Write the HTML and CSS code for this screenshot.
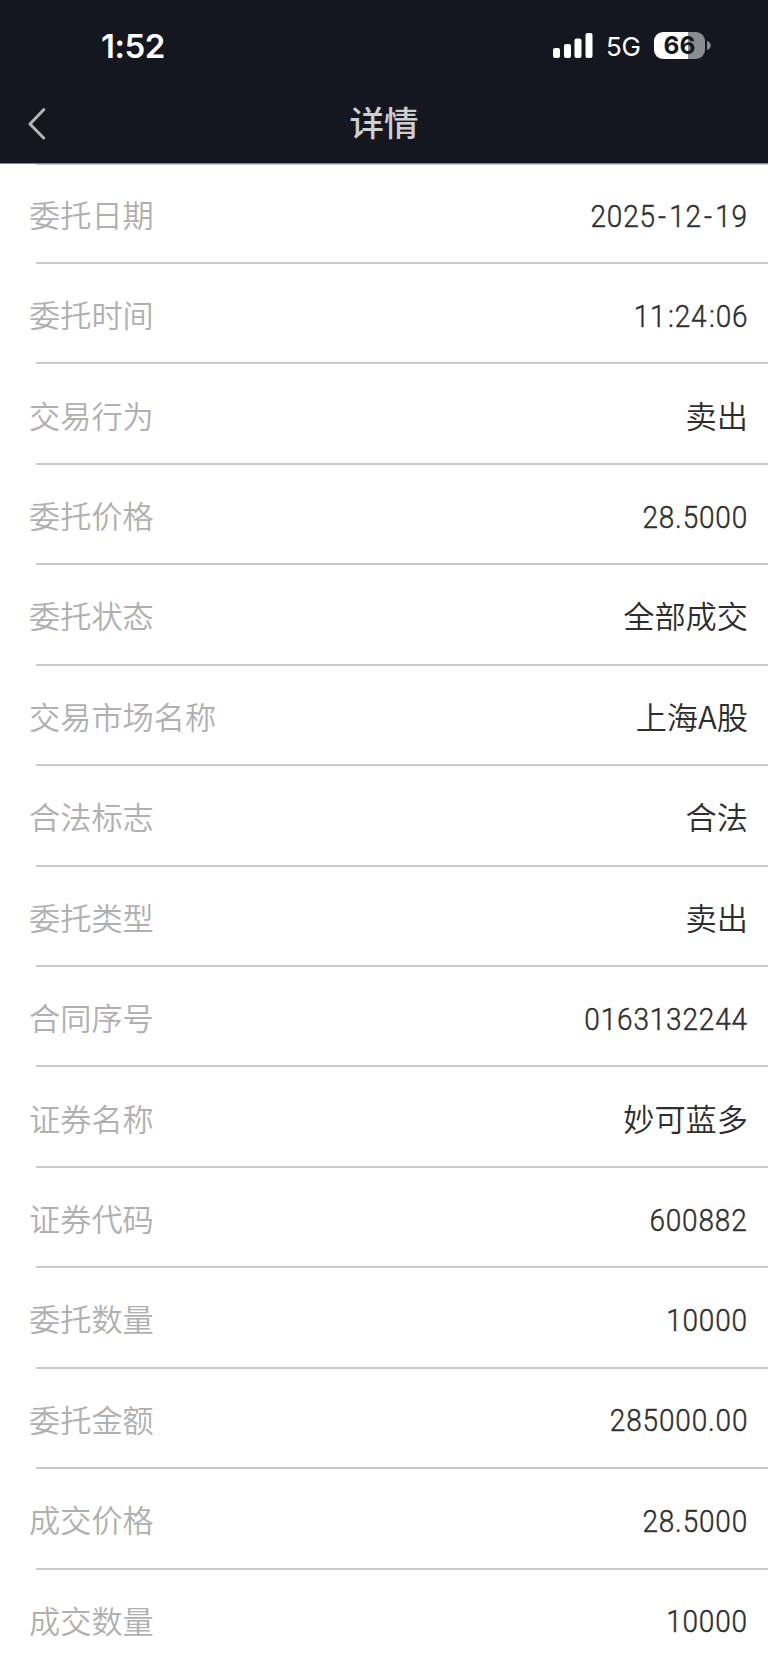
FILE: index.html
```html
<!DOCTYPE html>
<html lang="zh-CN">
<head>
    <meta charset="UTF-8">
    <meta name="viewport" content="width=device-width, initial-scale=1.0">
    <title>详情</title>
    <link rel="stylesheet" href="styles.css">
</head>
<body>

    <header class="header">
        <div class="status-bar">
            <span class="time">1:52</span>
            <div class="status-icons">
                <svg class="signal" width="40" height="25" viewBox="0 0 40 25" fill="#fff">
                    <rect x="0" y="15" width="7" height="10" rx="2"/>
                    <rect x="11" y="11" width="7" height="14" rx="2"/>
                    <rect x="21.5" y="5.5" width="7" height="19.5" rx="2"/>
                    <rect x="32.5" y="0" width="7" height="25" rx="2"/>
                </svg>
                <span class="network">5G</span>
                <div class="battery">66</div>
                <svg class="battery-tip" width="4" height="9" viewBox="0 0 4 9">
                    <path d="M0 0C5 1.5 5 7.5 0 9Z" fill="#8b8c90"/>
                </svg>
            </div>
        </div>
        <div class="nav-bar">
            <svg class="back" width="18" height="34" viewBox="0 0 18 34" fill="none" stroke="#b4b4b4" stroke-width="3" stroke-linecap="round" stroke-linejoin="round">
                <path d="M15.7 2.7L2 17L15.7 31"/>
            </svg>
            <h1>详情</h1>
        </div>
    </header>

    <div class="details">
        <div class="row"><span class="label">委托日期</span><span class="value num">2025<i class="dash">-</i>12<i class="dash">-</i>19</span></div>
        <div class="row"><span class="label">委托时间</span><span class="value num">11<i class="colon">:</i>24<i class="colon">:</i>06</span></div>
        <div class="row"><span class="label">交易行为</span><span class="value">卖出</span></div>
        <div class="row"><span class="label">委托价格</span><span class="value num">28.5000</span></div>
        <div class="row"><span class="label">委托状态</span><span class="value">全部成交</span></div>
        <div class="row"><span class="label">交易市场名称</span><span class="value">上海A股</span></div>
        <div class="row"><span class="label">合法标志</span><span class="value">合法</span></div>
        <div class="row"><span class="label">委托类型</span><span class="value">卖出</span></div>
        <div class="row"><span class="label">合同序号</span><span class="value num">0163132244</span></div>
        <div class="row"><span class="label">证券名称</span><span class="value">妙可蓝多</span></div>
        <div class="row"><span class="label">证券代码</span><span class="value num">600882</span></div>
        <div class="row"><span class="label">委托数量</span><span class="value num">10000</span></div>
        <div class="row"><span class="label">委托金额</span><span class="value num">285000.00</span></div>
        <div class="row"><span class="label">成交价格</span><span class="value num">28.5000</span></div>
        <div class="row"><span class="label">成交数量</span><span class="value num">10000</span></div>
    </div>

</body>
</html>
```
FILE: styles.css
```css
* {
    box-sizing: border-box;
}

body {
    margin: 0;
    height: 1662px;
    overflow: hidden;
    background: #fff;
    font-family: "Noto Sans CJK SC", sans-serif;
}

.header {
    height: 163.6px;
    background: #141720;
    border-bottom: 1px solid #85868b;
}

.status-bar {
    display: flex;
    justify-content: space-between;
    height: 92px;
    padding: 0 57px 0 101px;
    font-family: Inter, sans-serif;
    color: #fff;
}

.time {
    margin-top: 26px;
    font-size: 33px;
    line-height: 40px;
    font-weight: 600;
    letter-spacing: -0.5px;
}

.status-icons {
    display: flex;
    align-items: center;
    height: 90px;
}

.signal {
    margin-top: 1px;
}

.network {
    margin-left: 13px;
    width: 35px;
    font-size: 26px;
    font-weight: 400;
    letter-spacing: -0.3px;
    margin-top: 3px;
}

.battery {
    width: 51px;
    height: 27px;
    margin-left: 13px;
    border-radius: 9px;
    background: linear-gradient(90deg, #fff 66%, #8b8c90 66%);
    color: #141720;
    font-size: 24.5px;
    line-height: 27px;
    font-weight: 650;
    text-align: center;
}

.battery-tip {
    margin-left: 2px;
}

.nav-bar {
    display: grid;
    grid-template-columns: 100px 1fr 100px;
    align-items: center;
    height: 64px;
}

.back {
    margin-left: 28px;
}

h1 {
    margin: -7px 0 0;
    font-size: 34.5px;
    line-height: 60px;
    font-weight: 500;
    color: #cfcfcf;
    text-align: center;
}

.row {
    display: flex;
    justify-content: space-between;
    align-items: center;
    height: 100.43px;
    margin-left: 36px;
    padding: 2px 20px 0 0;
    border-bottom: 2px solid #cacacc;
    font-size: 31.2px;
    line-height: 46px;
}

.row:first-child {
    border-top: 1px solid #cacacc;
}

/* labels hang slightly left of the divider */
.label {
    margin-left: -7px;
    font-weight: 350;
    color: #b0b0b0;
}

.value {
    font-weight: 350;
    color: #2e2e2e;
}

/* narrow digits */
.num {
    margin-top: 3px;
    font-family: Roboto, sans-serif;
    font-size: 31.8px;
    font-weight: 300;
    letter-spacing: 0.95px;
    -webkit-text-stroke: 0.45px #333;
    transform: scaleX(0.88);
    transform-origin: right;
}

.dash,
.colon {
    font-style: normal;
}

.dash {
    padding: 0 2.5px;
}

.colon {
    padding: 0 0 0 1.8px;
}
```
